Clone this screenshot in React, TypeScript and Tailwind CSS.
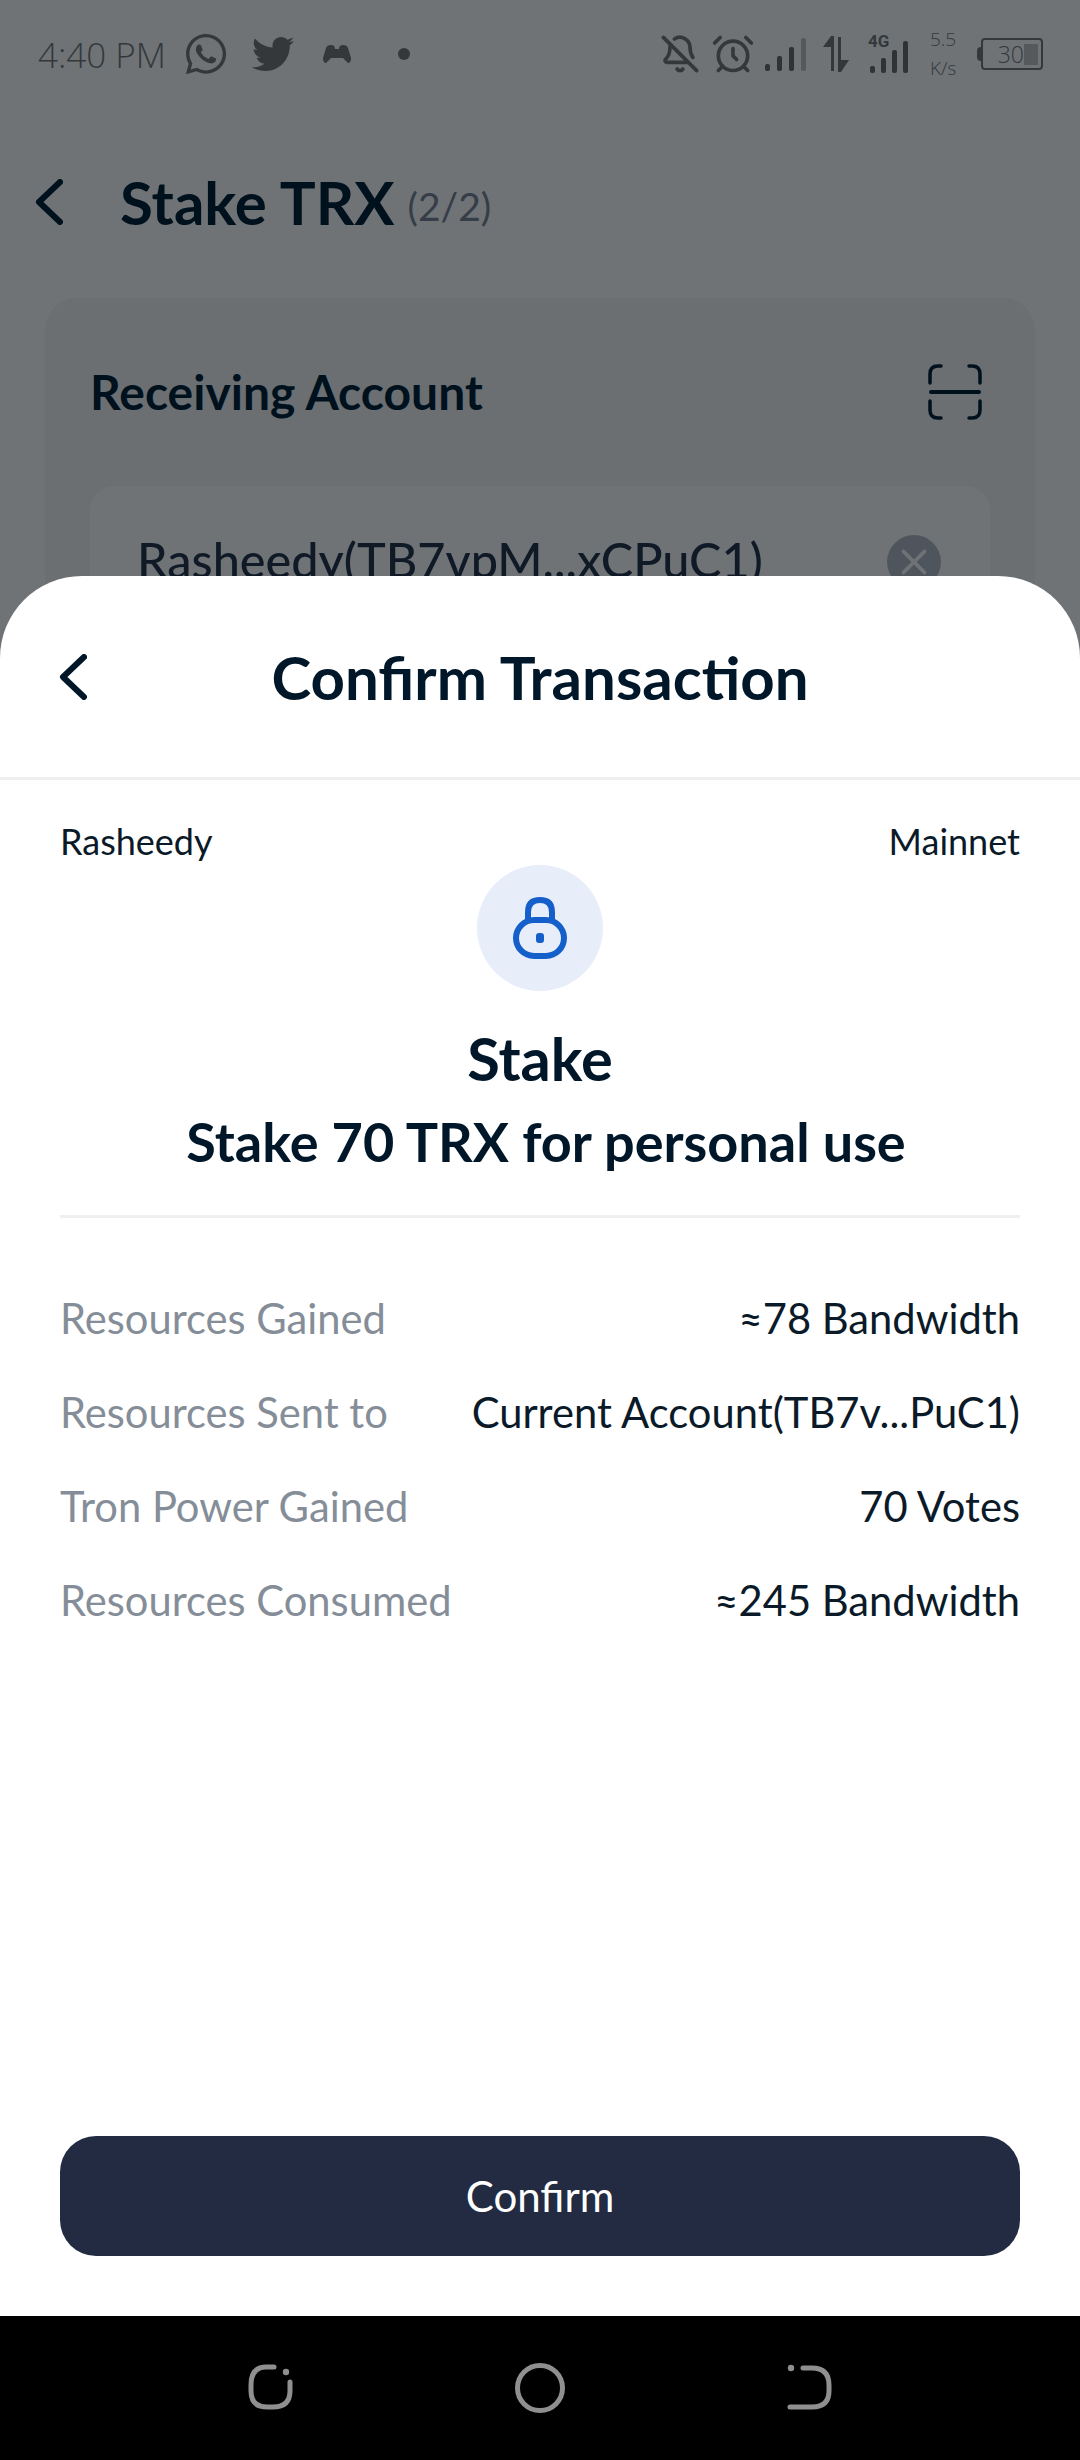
import { AlarmClock, BellOff, X } from "lucide-react";
import { FaTwitter, FaWhatsapp } from "react-icons/fa";

const rows = [
  { label: "Resources Gained", value: "≈78 Bandwidth" },
  { label: "Resources Sent to", value: "Current Account(TB7v...PuC1)" },
  { label: "Tron Power Gained", value: "70 Votes" },
  { label: "Resources Consumed", value: "≈245 Bandwidth" },
];

const SignalBars = ({ lastDim = false }: { lastDim?: boolean }) => (
  <svg width="42" height="34" viewBox="0 0 42 34" fill="#2f3336">
    <rect x="0" y="26" width="5" height="7" rx="2" />
    <rect x="12" y="18" width="5" height="15" rx="2" />
    <rect x="24" y="9" width="5" height="24" rx="2" />
    <rect x="36" y="0" width="5" height="33" rx="2" fill={lastDim ? "#55595c" : "#2f3336"} />
  </svg>
);

const SignalBarsSmall = () => (
  <svg className="-mt-[8px]" width="42" height="33" viewBox="0 0 42 33" fill="#2f3336">
    <rect x="2" y="25" width="5" height="7" rx="2" />
    <rect x="13" y="17" width="5" height="15" rx="2" />
    <rect x="24" y="9" width="5" height="23" rx="2" />
    <rect x="35" y="0" width="5" height="32" rx="2" />
  </svg>
);

const Chevron = ({ className }: { className?: string }) => (
  <svg className={className} width="28" height="46" viewBox="0 0 28 46" fill="none" stroke="currentColor" strokeWidth="6" strokeLinecap="round" strokeLinejoin="round">
    <path d="M25 3 L4 23 L25 43" />
  </svg>
);

const StatusBar = () => (
  <div className="flex h-[108px] items-center justify-between pl-[38px] pr-[37px] text-[#34383b]">
    <div className="flex items-center">
      <span className="w-[145px] text-[35px] leading-none font-light whitespace-nowrap font-['Open_Sans',sans-serif]">
        4:40 PM
      </span>
      <FaWhatsapp className="text-[46px]" />
      <FaTwitter className="ml-[23px] text-[42px]" />
      <svg className="ml-[28px]" width="30" height="20" viewBox="0 0 30 20" fill="#34383b">
        <path d="M4 4 Q5 1 9 1 Q13 1 13 5 H17 Q17 1 21 1 Q25 1 26 4 L29 14 Q29 19 26 19 L21 14 H9 L4 19 Q1 19 1 14 Z" />
      </svg>
      <span className="ml-[46px] h-[12px] w-[12px] rounded-full bg-[#34383b]" />
    </div>
    <div className="flex items-center">
      <BellOff size={40} strokeWidth={2.2} />
      <AlarmClock size={44} strokeWidth={2} className="ml-[11px]" />
      <div className="ml-[10px] mt-[2px]">
        <SignalBars lastDim />
      </div>
      <svg className="ml-[15px]" width="28" height="36" viewBox="0 0 28 36" fill="#34383b">
        <path d="M9 0 H12 V35 H9 V11 H1 Z" />
        <path d="M16 1 H19 V24 H27 L19 36 H16 Z" />
      </svg>
      <div className="ml-[18px] flex w-[42px] flex-col items-end">
        <span className="self-start text-[17px] leading-[15px] font-bold font-['Roboto',sans-serif]">4G</span>
        <SignalBarsSmall />
      </div>
      <div className="ml-[20px] flex w-[32px] flex-col text-[19px] leading-[29px] font-['Open_Sans',sans-serif] font-light">
        <span>5.5</span>
        <span>K/s</span>
      </div>
      <div className="ml-[15px] h-[14px] w-[4px] rounded-l-sm bg-[#34383b]" />
      <div className="flex h-[32px] w-[62px] items-center justify-end rounded-[4px] border-[2px] border-[#34383b] pr-[3px]">
        <span className="text-[23px] leading-none font-light font-['Open_Sans',sans-serif]">30</span>
        <span className="h-[21px] w-[14px] bg-[#55595c]" />
      </div>
    </div>
  </div>
);

const Backdrop = () => (
  <div className="h-[620px] overflow-hidden bg-[#6f7376]">
    <StatusBar />
    <div className="mt-[46px] flex h-[96px] items-center pl-[35px] text-[#00111e]">
      <Chevron />
      <span className="ml-[57px] text-[60px] leading-none font-bold">Stake TRX</span>
      <span className="ml-[13px] mt-[9px] text-[39px] leading-none text-[#363d49]">(2/2)</span>
    </div>
    <div className="mx-[45px] mt-[48px] h-[500px] rounded-t-[32px] bg-[#6b6f72] px-[45px]">
      <div className="flex h-[188px] items-center justify-between">
        <span className="text-[48px] leading-none font-bold text-[#00111e]">Receiving Account</span>
        <svg width="54" height="56" viewBox="0 0 54 56" fill="none" stroke="#00111e" strokeWidth="3.5" strokeLinecap="round" className="mr-[8px]">
          <path d="M2 19 V10 Q2 2 10 2 H13 M41 2 H44 Q52 2 52 10 V19 M2 37 V46 Q2 54 10 54 H13 M41 54 H44 Q52 54 52 46 V37" />
          <path d="M3 28 H51" strokeWidth="4" />
        </svg>
      </div>
      <div className="flex h-[200px] items-start justify-between rounded-t-[24px] bg-[#6f7376] px-[47px] pt-[49px]">
        <span className="text-[48.6px] leading-none font-medium text-[#101a27]">Rasheedy(TB7vpM...xCPuC1)</span>
        <div className="mr-[2px] flex h-[54px] w-[54px] items-center justify-center rounded-full bg-[#4f555d]">
          <X size={42} strokeWidth={2.2} color="#6f7376" />
        </div>
      </div>
    </div>
  </div>
);

const Sheet = () => (
  <div className="absolute inset-x-0 top-[576px] flex h-[1740px] flex-col rounded-t-[82px] bg-white text-[#001729]">
    <div className="relative flex h-[204px] items-center justify-center border-b-[3px] border-[#eeeff1]">
      <Chevron className="absolute left-[59px] top-[78px]" />
      <span className="text-[60px] leading-none font-bold">Confirm Transaction</span>
    </div>
    <div className="flex flex-1 flex-col px-[60px]">
      <div className="mt-[41px] flex justify-between text-[36px] leading-[40px] text-[#0b1a28]">
        <span>Rasheedy</span>
        <span>Mainnet</span>
      </div>
      <div className="mt-[4px] flex h-[126px] w-[126px] items-center justify-center self-center rounded-full bg-[#e7eefa]">
        <svg width="56" height="62" viewBox="0 0 56 62" fill="none" stroke="#155fcb" strokeWidth="6">
          <path d="M16 25 V15 Q16 3 28 3 Q40 3 40 15 V25" />
          <rect x="4" y="23" width="48" height="36" rx="18" />
          <rect x="24" y="36" width="8" height="10" rx="3" fill="#155fcb" stroke="none" />
        </svg>
      </div>
      <div className="mt-[35px] text-center text-[59.5px] leading-[64px] font-bold">Stake</div>
      <div className="mt-[22px] pl-[12px] text-center text-[54px] leading-[60px] font-bold whitespace-nowrap">
        Stake 70 TRX for personal use
      </div>
      <div className="mt-[43px] h-[3px] bg-[#eeeff1]" />
      <div className="mt-[54px] flex flex-col">
        {rows.map((row) => (
          <div key={row.label} className="flex h-[94px] items-center justify-between text-[41.7px] leading-none">
            <span className="text-[#858e98]">{row.label}</span>
            <span className="text-[#0b1a28]">{row.value}</span>
          </div>
        ))}
      </div>
      <button className="mt-auto mb-[60px] flex h-[120px] items-center justify-center rounded-[36px] bg-[#232b43] text-[42px] text-white">
        Confirm
      </button>
    </div>
  </div>
);

const NavBar = () => (
  <div className="absolute inset-x-0 bottom-0 flex h-[144px] items-center justify-center bg-black">
    <svg width="48" height="48" viewBox="0 0 48 48" fill="none" stroke="#8f8f8f" strokeWidth="5" strokeLinecap="round" className="mr-[220px] -mt-[2px]">
      <path d="M27 4 H19 Q4 4 4 22 V28 Q4 44 20 44 H26 Q43 44 43 28 V19" />
      <circle cx="39" cy="9" r="3.2" fill="#8f8f8f" stroke="none" />
    </svg>
    <div className="h-[50px] w-[50px] rounded-full border-[5px] border-[#8f8f8f]" />
    <svg width="48" height="48" viewBox="0 0 48 48" fill="none" stroke="#8f8f8f" strokeWidth="5" strokeLinecap="round" className="ml-[220px] -mt-[2px]">
      <path d="M18 5 H27 Q44 5 44 22 V28 Q44 44 27 44 H5" />
      <circle cx="6" cy="5" r="3.2" fill="#8f8f8f" stroke="none" />
    </svg>
  </div>
);

export default function App() {
  return (
    <div className="relative h-[2460px] w-[1080px] overflow-hidden bg-[#6f7376] font-['Lato',sans-serif]">
      <Backdrop />
      <Sheet />
      <NavBar />
    </div>
  );
}
